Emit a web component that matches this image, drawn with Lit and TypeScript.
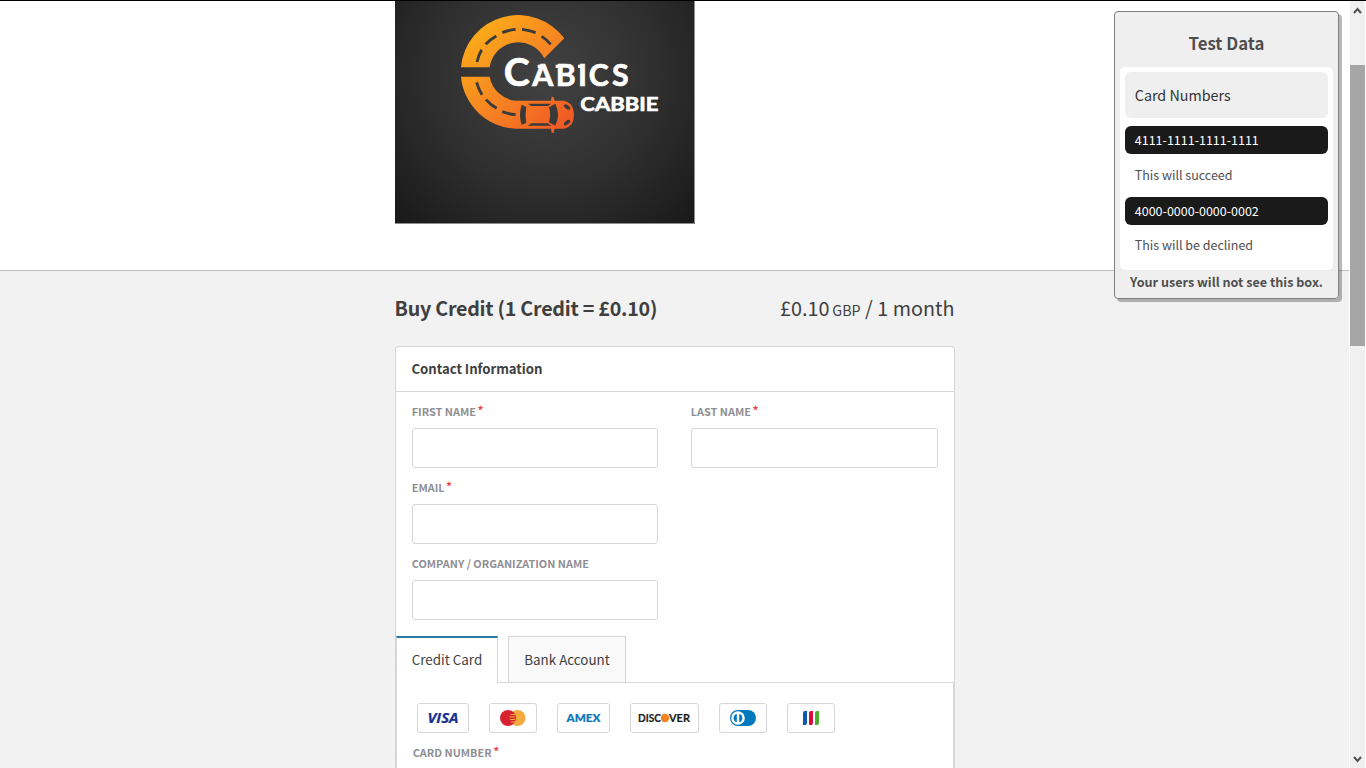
import { LitElement, html, css, svg, nothing } from "lit";
import { customElement, property, state } from "lit/decorators.js";

const FONT = css`"Noto Sans CJK SC", "Open Sans", sans-serif`;

@customElement("cabics-logo")
class CabicsLogo extends LitElement {
  static styles = css`
    :host { display: block; width: 300px; height: 223px; }
    svg { display: block; }
    .word { font-family: Lato, sans-serif; font-weight: 700; fill: #fff; }
    .serif { fill: none; stroke: #fff; stroke-width: 10; }
  `;
  render() {
    const dashes = "M261 186Q265 166 275 149M287 133Q301 118 319 108M337 98Q356 90 377 88M396 88Q418 90 437 98M455 109Q471 119 482 133M260 247Q265 267 276 284M288 299Q302 315 320 325M337 335Q355 342 377 344";
    return html`<svg width="300" height="223" viewBox="15 3 900 669" role="img" aria-label="Cabics Cabbie">
      <defs>
        <radialGradient id="bg" gradientUnits="userSpaceOnUse" cx="465" cy="225" r="640">
          <stop offset="0" stop-color="#424242"/><stop offset=".5" stop-color="#303030"/><stop offset="1" stop-color="#181818"/>
        </radialGradient>
        <linearGradient id="road" gradientUnits="userSpaceOnUse" x1="250" y1="90" x2="530" y2="370">
          <stop offset="0" stop-color="#fbab19"/><stop offset=".5" stop-color="#f68522"/><stop offset="1" stop-color="#f15a24"/>
        </linearGradient>
      </defs>
      <rect x="15" y="3" width="900" height="669" fill="url(#bg)"/>
      <path d="M913.500 3V670.500H15" fill="none" stroke="#8d8d8d" stroke-width="3"/>
      <path fill="url(#road)" d="M213 202A172 171 0 0 1 523 115L463 175A87 87 0 0 0 299 202Z"/>
      <path fill="url(#road)" d="M213 230H299A88 88 0 0 0 377 302H483L485 290L491 292L494 302H522Q552 308 552 344Q552 380 522 386H494L491 398L485 399L483 386H377A172 171 0 0 1 213 230Z"/>
      <path d="${dashes}" fill="none" stroke="#3a3a3a" stroke-width="8.500"/>
      <g fill="#3a3a3a">
        <path d="M395 314L409 321Q404 344 409 368L395 375Q385 344 395 314Z"/>
        <path d="M477 322L496 311Q512 344 496 377L477 367Q484 344 477 322Z"/>
        <path d="M413 311H484L474 318H424ZM413 377H484L474 370H424Z"/>
        <ellipse cx="531" cy="321" rx="11" ry="5.500" transform="rotate(38 531 321)"/>
        <ellipse cx="531" cy="368" rx="11" ry="5.500" transform="rotate(-38 531 368)"/>
      </g>
      <g class="word" stroke="#fff" stroke-width="2">
        <text x="341" y="259" font-size="117" textLength="78" lengthAdjust="spacingAndGlyphs">C</text>
        <text x="427 497 564 596 666" y="259" font-size="91">ABICS</text>
        <text x="571" y="332" font-size="57" textLength="234" lengthAdjust="spacingAndGlyphs">CABBIE</text>
      </g>
      <path class="serif" d="M443 199H462M497 199H512M564 199H578"/>
    </svg>`;
  }
}

@customElement("form-field")
class FormField extends LitElement {
  @property() label = "";
  @property({ type: Boolean }) required = false;
  static styles = css`
    :host { display: block; height: 76px; box-sizing: border-box; }
    label { display: flex; height: 29px; margin-left: -.300px; color: #8f8f95; font: 700 10.900px/25px ${FONT}; white-space: nowrap; }
    .star { color: #e8403f; font-size: 13px; line-height: 23px; margin-left: 1.500px; font-weight: 400; -webkit-text-stroke: .200px #e8403f; }
    input { display: block; width: 100%; height: 40px; box-sizing: border-box; border: 1px solid #d6d6d6; border-radius: 3px; background: #fff; padding: 0 10px; font: 14px ${FONT}; outline: none; }
  `;
  render() {
    return html`<label>${this.label}${this.required ? html`<span class="star">*</span>` : nothing}</label><input aria-label=${this.label} />`;
  }
}

@customElement("test-data-box")
class TestDataBox extends LitElement {
  static styles = css`
    :host { display: block; box-sizing: border-box; width: 225px; height: 288px; padding: 0 5px; border: 1px solid #7f7f7f; border-radius: 4px; background: rgba(238,238,238,.95); box-shadow: 3px 3px 0 rgba(0,0,0,.28); font-family: ${FONT}; color: #4f4f4f; }
    h2 { margin: 0; height: 55px; font: 700 16.800px/62px ${FONT}; text-align: center; }
    .panel { height: 203px; box-sizing: border-box; padding: 5px 5px 0; background: #fff; border-radius: 5px; }
    .head, .number, .note { padding-left: 9.800px; }
    .head { height: 46px; border-radius: 6px; background: #efefef; color: #333; font-size: 14.300px; line-height: 45px; margin-bottom: 8px; }
    .number { height: 28px; border-radius: 6px; background: #1a1a1a; color: #fff; font-size: 12.500px; line-height: 28px; }
    .note { height: 43px; font-size: 12.500px; line-height: 42px; }
    .note.last { line-height: 40px; }
    .foot { font-size: 12.600px; font-weight: 700; line-height: 24px; text-align: center; white-space: nowrap; }
  `;
  render() {
    return html`<h2>Test Data</h2>
      <div class="panel">
        <div class="head">Card Numbers</div>
        <div class="number">4111-1111-1111-1111</div><div class="note">This will succeed</div>
        <div class="number">4000-0000-0000-0002</div><div class="note last">This will be declined</div>
      </div>
      <div class="foot">Your users will not see this box.</div>`;
  }
}

const brands = [
  { name: "Visa", w: 52, art: svg`<text x="9.500" y="19" font-size="13.500" font-weight="700" font-style="italic" fill="#1a2f91" stroke="#1a2f91" stroke-width=".2" textLength="31" lengthAdjust="spacingAndGlyphs">VISA</text>` },
  { name: "Mastercard", w: 48, art: svg`<circle cx="27.500" cy="14" r="8" fill="#f3ab40"/><circle cx="18" cy="14" r="8" fill="#d92231"/><path d="M20.500 10.500H25M19.500 13H25M20 15.500H25M21 18H25" stroke="#f3ab40" stroke-width="1"/>` },
  { name: "American Express", w: 53, art: svg`<text x="8.500" y="18" font-family="Lato" font-size="11.700" font-weight="900" fill="#0b78bb" stroke="#0b78bb" stroke-width=".2" textLength="34" lengthAdjust="spacingAndGlyphs">AMEX</text>` },
  { name: "Discover", w: 69, art: svg`<g font-family="Lato" font-size="11.500" font-weight="700" fill="#1c1c1c" stroke="#1c1c1c" stroke-width=".2"><text x="7" y="18" textLength="23" lengthAdjust="spacingAndGlyphs">DISC</text><text x="38" y="18" textLength="21" lengthAdjust="spacingAndGlyphs">VER</text></g><circle cx="34" cy="14" r="4.200" fill="#f58220"/>` },
  { name: "Diners Club", w: 48, art: svg`<rect x="10" y="6" width="26" height="16" rx="8" fill="#0079be"/><circle cx="18" cy="14" r="6.800" fill="#fff"/><path d="M16.800 9.700A4.500 4.500 0 0 0 16.800 18.300ZM19.200 9.700A4.500 4.500 0 0 1 19.200 18.300Z" fill="#0079be"/>` },
  { name: "JCB", w: 48, art: svg`<path d="M17 7H19V19Q19 21 17 21H15V9Q15 7 17 7Z" fill="#0e59a8"/><path d="M23 7H25V19Q25 21 23 21H21V9Q21 7 23 7Z" fill="#d80b3b"/><path d="M29 7H31V19Q31 21 29 21H27V9Q27 7 29 7Z" fill="#4caf2b"/>` },
];

@customElement("app-root")
class AppRoot extends LitElement {
  @state() tab = 0;
  static styles = css`
    :host { display: flex; box-sizing: border-box; width: 1366px; height: 768px; overflow: hidden; border-top: 1px solid #000; background: #f2f2f2; font-family: ${FONT}; color: #3f3f3f; }
    .page { flex: 1; min-width: 0; }
    .top { height: 269px; background: #fff; border-bottom: 1px solid #bebebe; padding-left: 395px; }
    .column { width: 560px; margin-left: 395px; }
    .summary { display: flex; justify-content: space-between; height: 75px; line-height: 73px; white-space: nowrap; }
    .title { font-size: 19.700px; font-weight: 700; letter-spacing: -.250px; margin-left: -.500px; }
    .price { font-size: 19.800px; margin-right: .500px; }
    .price small { font-size: 14.300px; margin-left: -1.500px; }
    .card { height: 440px; box-sizing: border-box; border: 1px solid #d6d6d6; border-bottom: 0; border-radius: 4px 4px 0 0; background: #fff; }
    .card-head { height: 44px; border-bottom: 1px solid #d6d6d6; padding-left: 15.500px; font-size: 13.200px; letter-spacing: -.050px; font-weight: 700; line-height: 44px; }
    .fields { display: grid; grid-template-columns: 246px 247px; column-gap: 33px; grid-auto-rows: 76px; padding: 7px 16px 0; height: 237px; }
    .left { grid-column: 1; }
    .tabs { display: flex; height: 47px; }
    .tab { box-sizing: border-box; height: 47px; font: 13.400px/44px ${FONT}; color: #3f3f3f; padding: 0 0 2px; border: 1px solid #d6d6d6; background: #f9f9f9; white-space: nowrap; }
    .tab.first { width: 102px; }
    .tab.second { width: 118px; }
    .tab.active { background: #fff; border-top: 2px solid #2a77a8; border-bottom: 0; padding-bottom: 2px; line-height: 41px; }
    .gap { width: 10px; border-bottom: 1px solid #d6d6d6; }
    .rest { flex: 1; border-bottom: 1px solid #d6d6d6; }
    .panel { height: 120px; border: solid #d6d6d6; border-width: 0 1px; padding: 20px 0 0 20px; }
    .brands { display: flex; gap: 20px; height: 30px; }
    .brand { box-sizing: border-box; height: 30px; border: 1px solid #d6d6d6; border-radius: 3px; font-family: "Open Sans", sans-serif; }
    .brand svg { display: block; overflow: visible; }
    .number { display: block; margin: 7px 0 0 -4px; width: 400px; }
    .floating { position: absolute; left: 1114px; top: 11px; }
    .scrollbar { display: flex; flex-direction: column; justify-content: space-between; width: 15px; border-left: 1px solid #fff; border-right: 1px solid #fff; background: #f0f0f0; }
    .arrow { display: block; width: 15px; height: 17px; }
    .thumb { height: 281px; margin-top: 47px; margin-bottom: auto; background: #a6a6a6; }
  `;
  render() {
    return html`
      <main class="page">
        <header class="top"><cabics-logo></cabics-logo></header>
        <div class="column">
          <div class="summary"><div class="title">Buy Credit (1 Credit = £0.10)</div><div class="price">£0.10 <small>GBP</small> / 1 month</div></div>
          <section class="card">
            <div class="card-head">Contact Information</div>
            <div class="fields">
              <form-field label="FIRST NAME" required></form-field>
              <form-field label="LAST NAME" required></form-field>
              <form-field class="left" label="EMAIL" required></form-field>
              <form-field class="left" label="COMPANY / ORGANIZATION NAME"></form-field>
            </div>
            <div class="tabs">
              <button class="tab first ${this.tab === 0 ? "active" : ""}" @click=${() => (this.tab = 0)}>Credit Card</button>
              <div class="gap"></div>
              <button class="tab second ${this.tab === 1 ? "active" : ""}" @click=${() => (this.tab = 1)}>Bank Account</button>
              <div class="rest"></div>
            </div>
            <div class="panel">
              <div class="brands">${brands.map((b) => html`<div class="brand"><svg width=${b.w - 2} height="28" role="img" aria-label=${b.name}>${b.art}</svg></div>`)}</div>
              <form-field class="number" label="CARD NUMBER" required></form-field>
            </div>
          </section>
        </div>
      </main>
      <aside class="scrollbar">
        <svg class="arrow" viewBox="0 0 15 17"><path d="M4 12L7.500 8L11 12" fill="none" stroke="#505050" stroke-width="2"/></svg>
        <div class="thumb"></div>
        <svg class="arrow" viewBox="0 0 15 17"><path d="M4 6L7.500 10L11 6" fill="none" stroke="#505050" stroke-width="2"/></svg>
      </aside>
      <test-data-box class="floating"></test-data-box>`;
  }
}
